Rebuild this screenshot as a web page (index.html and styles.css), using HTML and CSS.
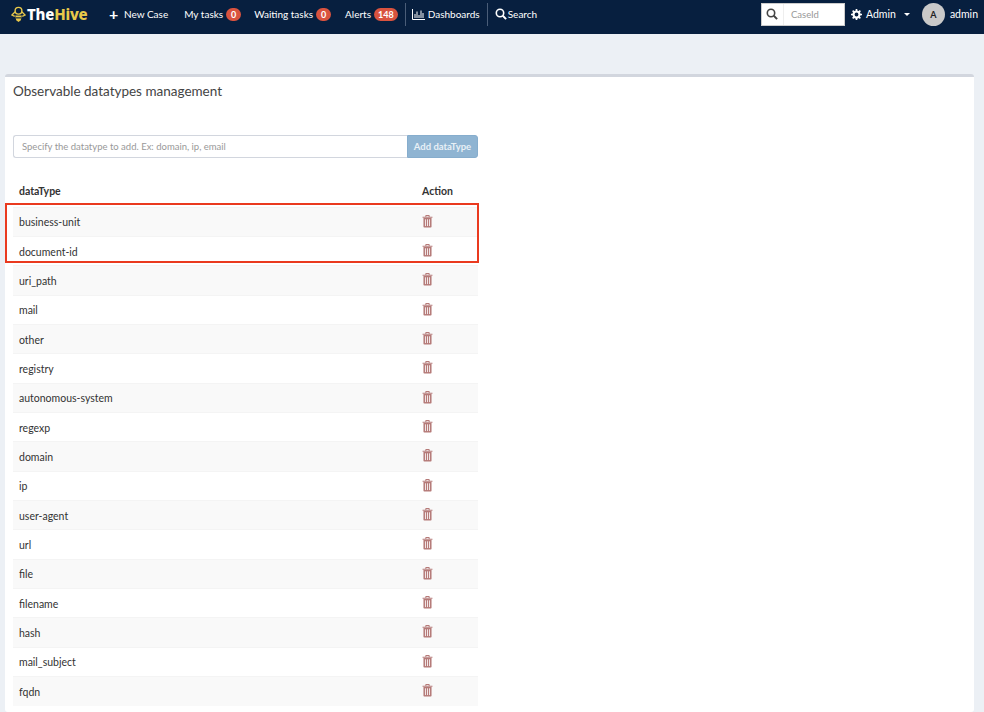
FILE: index.html
```html
<!DOCTYPE html>
<html lang="en">
<head>
  <meta charset="UTF-8">
  <meta name="viewport" content="width=device-width, initial-scale=1.0">
  <title>TheHive - Observable datatypes management</title>
  <link rel="stylesheet" href="styles.css">
</head>
<body>
  <svg class="svg-defs" width="0" height="0" aria-hidden="true">
    <symbol id="icon-trash" viewBox="0 0 12 14">
      <path d="M4.2 2V.9q0-.5.5-.5h2.6q.5 0 .5.5V2M.6 2.4h10.8" fill="none" stroke="currentColor" stroke-width="1.1"/>
      <path d="M1.6 3.2h8.8v9.5q0 .9-.9.9h-7q-.9 0-.9-.9z" fill="currentColor"/>
      <path d="M3.8 4.6v7.4M6 4.6v7.4M8.2 4.6v7.4" stroke="#fff" stroke-width=".9"/>
    </symbol>
    <symbol id="icon-search" viewBox="0 0 12 12">
      <circle cx="5" cy="5" r="3.7" fill="none" stroke="currentColor" stroke-width="1.6"/>
      <path d="M7.8 7.8l3.3 3.3" stroke="currentColor" stroke-width="2"/>
    </symbol>
  </svg>

  <nav class="navbar">
    <a class="brand">
      <svg class="brand-logo" viewBox="0 0 16 18" width="15" height="17">
        <circle cx="8" cy="5" r="3.6" fill="none" stroke="#e8c84a" stroke-width="1.5"/>
        <path d="M4.5 6L1 9.5 4 11M11.5 6L15 9.5 12 11" fill="none" stroke="#e8c84a" stroke-width="1.4"/>
        <path d="M4.5 10h7l-1 5-2.5 2-2.5-2z" fill="#e8c84a"/>
        <path d="M5 12.6h6" stroke="#071f3f" stroke-width="1.2"/>
      </svg>
      <span class="brand-the">The</span><span class="brand-hive">Hive</span>
    </a>
    <a class="nav-link nav-new"><span class="plus">+</span>New Case</a>
    <a class="nav-link">My tasks <span class="badge">0</span></a>
    <a class="nav-link nav-waiting">Waiting tasks <span class="badge">0</span></a>
    <a class="nav-link nav-alerts">Alerts <span class="badge">148</span></a>
    <a class="nav-link nav-divided">
      <svg class="nav-icon" viewBox="0 0 13 11" width="13" height="11">
        <path d="M.5 0v10.5H13M3 5v4M5 2.5V9M7 6v3M9 1.5V9M11 4v5" fill="none" stroke="currentColor"/>
      </svg>
      Dashboards
    </a>
    <a class="nav-link nav-divided nav-search">
      <svg class="nav-icon" width="12" height="12"><use href="#icon-search"/></svg>
      Search
    </a>

    <div class="nav-right">
      <div class="case-search">
        <span class="case-search-icon"><svg width="12" height="12"><use href="#icon-search"/></svg></span>
        <span class="case-search-input">CaseId</span>
      </div>
      <a class="nav-link nav-admin">
        <svg class="nav-icon" viewBox="0 0 12 12" width="11" height="11">
          <circle cx="6" cy="6" r="3.3" fill="none" stroke="currentColor" stroke-width="2.4"/>
          <path d="M6 0v2.4M6 9.6V12M0 6h2.4M9.6 6H12M1.8 1.8l1.7 1.7M8.5 8.5l1.7 1.7M10.2 1.8L8.5 3.5M3.5 8.5l-1.7 1.7" stroke="currentColor" stroke-width="1.8"/>
        </svg>
        Admin <span class="caret"></span>
      </a>
      <div class="user">
        <span class="avatar">A</span>
        <span>admin</span>
      </div>
    </div>
  </nav>

  <main class="content">
    <section class="box">
      <h3 class="box-title">Observable datatypes management</h3>

      <div class="box-body">
        <form class="add-form">
          <input class="add-input" type="text" placeholder="Specify the datatype to add. Ex: domain, ip, email">
          <button class="add-btn" type="button" disabled>Add dataType</button>
        </form>

        <div class="table-wrap">
          <table class="types">
            <thead>
              <tr><th>dataType</th><th class="col-action">Action</th></tr>
            </thead>
            <tbody>
              <tr><td>business-unit</td><td class="col-action"><svg class="trash"><use href="#icon-trash"/></svg></td></tr>
              <tr><td>document-id</td><td class="col-action"><svg class="trash"><use href="#icon-trash"/></svg></td></tr>
              <tr><td>uri_path</td><td class="col-action"><svg class="trash"><use href="#icon-trash"/></svg></td></tr>
              <tr><td>mail</td><td class="col-action"><svg class="trash"><use href="#icon-trash"/></svg></td></tr>
              <tr><td>other</td><td class="col-action"><svg class="trash"><use href="#icon-trash"/></svg></td></tr>
              <tr><td>registry</td><td class="col-action"><svg class="trash"><use href="#icon-trash"/></svg></td></tr>
              <tr><td>autonomous-system</td><td class="col-action"><svg class="trash"><use href="#icon-trash"/></svg></td></tr>
              <tr><td>regexp</td><td class="col-action"><svg class="trash"><use href="#icon-trash"/></svg></td></tr>
              <tr><td>domain</td><td class="col-action"><svg class="trash"><use href="#icon-trash"/></svg></td></tr>
              <tr><td>ip</td><td class="col-action"><svg class="trash"><use href="#icon-trash"/></svg></td></tr>
              <tr><td>user-agent</td><td class="col-action"><svg class="trash"><use href="#icon-trash"/></svg></td></tr>
              <tr><td>url</td><td class="col-action"><svg class="trash"><use href="#icon-trash"/></svg></td></tr>
              <tr><td>file</td><td class="col-action"><svg class="trash"><use href="#icon-trash"/></svg></td></tr>
              <tr><td>filename</td><td class="col-action"><svg class="trash"><use href="#icon-trash"/></svg></td></tr>
              <tr><td>hash</td><td class="col-action"><svg class="trash"><use href="#icon-trash"/></svg></td></tr>
              <tr><td>mail_subject</td><td class="col-action"><svg class="trash"><use href="#icon-trash"/></svg></td></tr>
              <tr><td>fqdn</td><td class="col-action"><svg class="trash"><use href="#icon-trash"/></svg></td></tr>
            </tbody>
          </table>
          <div class="highlight"></div>
        </div>
      </div>
    </section>
  </main>
</body>
</html>
```

FILE: styles.css
```css
* {
  box-sizing: border-box;
}
html, body {
  height: 100%;
}
body {
  margin: 0;
  background: #ecf0f5;
  color: #333;
  font-family: Lato, "Noto Sans", sans-serif;
  font-size: 10.5px;
  overflow: hidden;
}
.svg-defs {
  position: absolute;
}

/* top bar */
.navbar {
  display: flex;
  align-items: center;
  height: 34px;
  padding: 0 0 6px 11px;
  background: #071f3f;
  color: #fff;
}
.brand {
  display: flex;
  align-items: center;
  width: 98px;
  font-family: "Noto Sans", sans-serif;
  font-size: 15px;
  font-weight: 800;
  letter-spacing: -.2px;
}
.brand-logo {
  margin-right: 1px;
}
.brand-hive {
  color: #e8c84a;
}
.nav-link {
  display: flex;
  align-items: center;
  gap: 3px;
  height: 23px;
  margin-right: 13px;
  font-size: 10px;
  white-space: nowrap;
}
.nav-new {
  margin-right: 16px;
}
.nav-waiting {
  margin-right: 14px;
}
.nav-alerts {
  margin-right: 7px;
}
.plus {
  width: 12px;
  font-size: 16px;
  font-weight: 700;
  line-height: 1;
}
.nav-divided {
  margin-right: 0;
  padding: 0 7px 0 6px;
  border-left: 1px solid #4a5d78;
}
.nav-search {
  gap: 1px;
  padding-left: 7px;
}
.nav-icon {
  flex: none;
}
.badge {
  display: inline-block;
  min-width: 15px;
  padding: 1px 4px;
  border-radius: 8px;
  background: #d9533f;
  color: #fff;
  font-size: 9px;
  font-weight: 700;
  line-height: 11px;
  text-align: center;
}
.nav-right {
  display: flex;
  align-items: center;
  margin-left: auto;
  padding-right: 6px;
}
.case-search {
  display: flex;
  width: 84px;
  height: 23px;
  margin-right: 6px;
  background: #fff;
  border: 1px solid #ccc;
}
.case-search-icon {
  display: flex;
  align-items: center;
  justify-content: center;
  width: 22px;
  color: #444;
  border-right: 1px solid #eee;
}
.case-search-input {
  padding-left: 7px;
  color: #999;
  font-size: 9.5px;
  line-height: 21px;
}
.nav-admin {
  gap: 4px;
  margin-right: 12px;
  font-size: 10.5px;
}
.caret {
  width: 0;
  height: 0;
  margin-left: 4px;
  border-top: 3px solid #fff;
  border-left: 3.5px solid transparent;
  border-right: 3.5px solid transparent;
}
.user {
  display: flex;
  align-items: center;
  gap: 5px;
}
.avatar {
  width: 23px;
  height: 23px;
  border-radius: 50%;
  background: #c9c9c9;
  color: #222;
  font-size: 9px;
  font-weight: 700;
  line-height: 23px;
  text-align: center;
}

/* page */
.content {
  padding: 40px 10px 0 5px;
}
.box {
  height: 638px;
  background: #fff;
  border-top: 3px solid #d2d6de;
  border-radius: 3px;
}
.box-title {
  margin: 0;
  padding: 5px 8px;
  color: #444;
  font-size: 13.5px;
  font-weight: 400;
  line-height: 18px;
}
.box-body {
  width: 465px;
  margin-left: 8px;
  padding-top: 30px;
}
.add-form {
  display: flex;
  height: 23px;
}
.add-input {
  flex: 1;
  min-width: 0;
  padding: 0 8px;
  border: 1px solid #d2d6de;
  border-right: 0;
  border-radius: 3px 0 0 3px;
  font: inherit;
  font-size: 9.5px;
}
.add-input::placeholder {
  color: #999;
}
.add-btn {
  width: 71px;
  padding: 0;
  background: #8fb4d2;
  border: 1px solid #86adcd;
  border-radius: 0 3px 3px 0;
  color: #e8f0f6;
  font: inherit;
  font-size: 9.5px;
  font-weight: 700;
}

/* datatypes table */
.table-wrap {
  position: relative;
  width: 465px;
  margin-top: 21px;
}
.types {
  width: 100%;
  border-collapse: collapse;
  table-layout: fixed;
  color: #333;
}
.types th {
  height: 28px;
  padding: 0 6px 4px;
  font-weight: 700;
  text-align: left;
}
.types td {
  height: 29.35px;
  padding: 1px 6px 0;
  border-top: 1px solid #f4f4f4;
}
.types tbody tr:nth-child(odd) {
  background: #f9f9f9;
}
.types .col-action {
  width: 62px;
  padding-left: 6px;
}
.trash {
  display: block;
  width: 11px;
  height: 13px;
  margin-bottom: 2px;
  color: #b57a78;
}
.highlight {
  position: absolute;
  top: 24px;
  left: -8px;
  width: 474px;
  height: 60px;
  border: 2px solid #ea3a1f;
  pointer-events: none;
}
```
